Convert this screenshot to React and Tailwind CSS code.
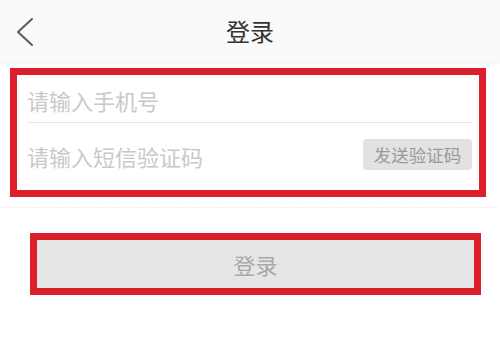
export default function App() {
  const font = { fontFamily: '"Noto Sans CJK SC", "Noto Sans", sans-serif' };

  return (
    <div className="w-[500px] h-[342px] bg-white overflow-hidden" style={font}>
      {/* Header */}
      <div className="relative h-[62px] bg-[#f9f9f9] flex items-center justify-center shadow-[0_1px_3px_rgba(0,0,0,0.08)]">
        <svg
          className="absolute left-[15px] top-[17px]"
          width="20"
          height="30"
          viewBox="0 0 20 30"
          fill="none"
        >
          <path d="M17 2 L3 15 L17 28" stroke="#5a5a5a" strokeWidth="2" strokeLinecap="round" strokeLinejoin="round" />
        </svg>
        <span className="text-[24px] leading-none text-[#333]">登录</span>
      </div>

      {/* Inputs */}
      <div className="ml-[10px] mr-[14px] mt-[6px] h-[129px] border-[7px] border-[#dd1f2b] bg-white px-[10px] pr-[7px] flex flex-col">
        <div className="h-[48px] flex items-center border-b border-[#e6e6e6]">
          <span className="text-[22px] leading-none text-[#c9c9c9] pt-[2px]">请输入手机号</span>
        </div>
        <div className="flex-1 flex items-center justify-between">
          <span className="text-[22px] leading-none text-[#c9c9c9] -mt-[2px]">请输入短信验证码</span>
          <div className="w-[109px] h-[31px] rounded-[4px] bg-[#e2e2e2] flex items-center justify-center -mt-[4px]">
            <span className="text-[17.5px] leading-none text-[#9a9a9a]">发送验证码</span>
          </div>
        </div>
      </div>

      <div className="mt-[10px] mx-[2px] border-t border-dashed border-[#f0f0f0]" />

      {/* Login button */}
      <div className="ml-[30px] mr-[19px] mt-[25px] h-[62px] border-[7px] border-[#dd1f2b] bg-[#e6e6e6] flex items-center justify-center">
        <span className="text-[22px] leading-none text-[#a8a8a8]">登录</span>
      </div>
    </div>
  );
}
